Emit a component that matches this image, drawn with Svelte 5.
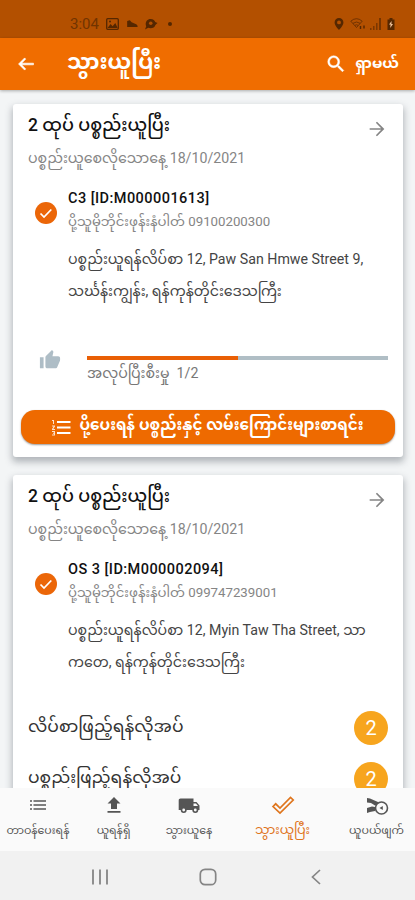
<script lang="ts">
	const title = 'သွားယူပြီး';

	const pickups = [
		{
			title: '2 ထုပ် ပစ္စည်းယူပြီး',
			date: '18/10/2021',
			name: 'C3 [ID:M000001613]',
			phone: '09100200300',
			address: ['ပစ္စည်းယူရန်လိပ်စာ 12, Paw San Hmwe Street 9,', 'သင်္ဃန်းကျွန်း, ရန်ကုန်တိုင်းဒေသကြီး'],
			done: 1,
			total: 2,
			todos: []
		},
		{
			title: '2 ထုပ် ပစ္စည်းယူပြီး',
			date: '18/10/2021',
			name: 'OS 3 [ID:M000002094]',
			phone: '099747239001',
			address: ['ပစ္စည်းယူရန်လိပ်စာ 12, Myin Taw Tha Street, သာ', 'ကတေ, ရန်ကုန်တိုင်းဒေသကြီး'],
			done: 0,
			total: 0,
			todos: [
				{ label: 'လိပ်စာဖြည့်ရန်လိုအပ်', count: 2 },
				{ label: 'ပစ္စည်းဖြည့်ရန်လိုအပ်', count: 2 }
			]
		}
	];

	const tabs = [
		{ icon: 'list', label: 'တာဝန်ပေးရန်' },
		{ icon: 'upload', label: 'ယူရန်ရှိ' },
		{ icon: 'truck', label: 'သွားယူနေ' },
		{ icon: 'check', label: 'သွားယူပြီး' },
		{ icon: 'cancel', label: 'ယူပယ်ဖျက်' }
	];

	let active = 'check';
</script>

<div class="screen">
	<div class="status">
		<span class="time">3:04</span>
		<svg class="s-image" width="13" height="12" viewBox="0 0 13 12">
			<rect x="0.7" y="0.7" width="11.6" height="10.6" rx="1" fill="none" stroke="currentColor" stroke-width="1.3" />
			<path d="M1.5 10 4.6 6l2 2.2L9.3 5l2.4 5z" fill="currentColor" />
			<circle cx="4" cy="3.5" r="1" fill="currentColor" />
		</svg>
		<svg class="s-shoe" width="11" height="8" viewBox="0 0 12 9">
			<path d="M0 1l3-.8 2 2.3 5.2 2.3q1.6.8 1.6 3.2H0z" fill="currentColor" />
		</svg>
		<svg class="s-chat" width="13" height="12" viewBox="0 0 14 12">
			<path d="M6 .5c3 0 4.600 1.600 5 3.400L13.500 5l-2.300 2C10.500 9.500 8.500 10.500 6 10.500L3.500 10 0 12l1.300-3.500C-.2 5 1.500.5 6 .5z" fill="currentColor" />
			<circle cx="6.200" cy="5.300" r="1.900" fill="#b35000" />
		</svg>
		<i class="dot"></i>
		<div class="signals">
			<svg width="10" height="12" viewBox="0 0 10 13">
				<path fill-rule="evenodd" d="M5 0a4.800 4.800 0 0 1 4.800 4.800C9.800 8 5 13 5 13S.2 8 .2 4.800A4.800 4.800 0 0 1 5 0zm0 2.700a2.100 2.100 0 1 0 0 4.200 2.100 2.100 0 0 0 0-4.200z" fill="currentColor" />
			</svg>
			<svg class="wifi" width="16" height="12" viewBox="0 0 16 12" fill="none" stroke="currentColor">
				<path d="M.8 3.200Q6.500-1.800 12.200 3.200L6.500 9.500z" opacity=".7" />
				<path d="M3 5.300q3.500-2.600 7 0M5 7.300q1.500-1 3 0" opacity=".7" />
				<path d="M10.500 8v3M14 7.500v3" stroke-width="1.400" />
			</svg>
			<svg class="bars" width="11" height="12" viewBox="0 0 11 12" fill="currentColor">
				<path opacity=".6" d="M0 10h1.500v2H0zM3 8h1.500v4H3zM6 5h1.500v7H6z" />
				<path opacity=".8" d="M9.200 0h1.600v12H9.200z" />
			</svg>
			<svg width="8" height="12" viewBox="0 0 8 12">
				<path d="M2.500 0h3v1.500h2V12H.5V1.500h2z" fill="currentColor" />
				<path d="M4.600 3 2 6.500h1.600L3.200 10 6 6H4.400z" fill="#f3c7a0" />
			</svg>
		</div>
	</div>

	<header class="appbar">
		<svg class="back" width="20" height="20" viewBox="0 0 24 24" fill="#fff" stroke="#fff" stroke-width=".7">
			<path d="M21 11H6.830l4.880-4.880L10.300 4.700 3 12l7.300 7.300 1.410-1.420L6.830 13H21z" />
		</svg>
		<h1>{title}</h1>
		<div class="search">
			<svg width="22" height="22" viewBox="0 0 24 24" fill="#fff" stroke="#fff" stroke-width=".5">
				<path d="M15.500 14h-.79l-.28-.27A6.471 6.471 0 0 0 16 9.500 6.500 6.500 0 1 0 9.500 16c1.610 0 3.090-.59 4.230-1.570l.27.28v.79l5 4.990L20.490 19l-4.990-5zm-6 0C7.010 14 5 11.990 5 9.500S7.010 5 9.500 5 14 7.010 14 9.500 11.990 14 9.500 14z" />
			</svg>
			<span>ရှာမယ်</span>
		</div>
	</header>

	<main class="list">
		{#each pickups as p}
			<section class="card">
				<div class="head">
					<h2>{p.title}</h2>
					<svg width="22" height="22" viewBox="0 0 24 24" fill="#858585">
						<path d="m12 4-1.300 1.300 5.800 5.800H4v1.800h12.500l-5.800 5.800L12 20l8-8z" />
					</svg>
				</div>
				<div class="date">ပစ္စည်းယူစေလိုသောနေ့ {p.date}</div>

				<div class="sender">
					<svg class="tick" width="22" height="22" viewBox="0 0 22 22">
						<circle cx="11" cy="11" r="11" fill="#eb6608" />
						<path d="m5.500 11.500 3.500 3.500 7.300-7.500" fill="none" stroke="#fff" stroke-width="1.700" />
					</svg>
					<div class="info">
						<div class="name">{p.name}</div>
						<div class="phone">ပို့သူမိုဘိုင်းဖုန်းနံပါတ် {p.phone}</div>
						<div class="address">
							{#each p.address as line}
								<div>{line}</div>
							{/each}
						</div>
					</div>
				</div>

				{#if p.total}
					<div class="progress">
						<svg width="22" height="22" viewBox="0 0 24 24" fill="#aebdc6">
							<path d="M1 21h4V9H1v12zm22-11c0-1.100-.9-2-2-2h-6.310l.95-4.570.03-.32c0-.41-.17-.79-.44-1.060L14.170 1 7.590 7.590C7.220 7.950 7 8.450 7 9v10c0 1.100.9 2 2 2h9c.83 0 1.540-.5 1.840-1.220l3.020-7.050c.09-.23.14-.47.14-.73v-2z" />
						</svg>
						<div class="meter">
							<div class="track">
								<div class="fill" style={`width: ${(p.done / p.total) * 100}%`}></div>
							</div>
							<div class="caption">အလုပ်ပြီးစီးမှု&nbsp; {p.done}/{p.total}</div>
						</div>
					</div>
					<button class="route">
						<svg width="19" height="17" viewBox="0 0 19 17" fill="#fff">
							<path d="M5 2h13.500v1.900H5zM5 7.500h13.500v1.900H5zM5 13h13.500v1.900H5z" />
							<path opacity=".8" d="M0 1h2v4H1V2H0zM0 6.500h3v1L1.300 10H3v1H0v-1l1.600-2.500H0zM0 12h3v4.500H0v-.9h2v-.9H1v-.9h1V13H0z" />
						</svg>
						<span>ပို့ပေးရန် ပစ္စည်းနှင့် လမ်းကြောင်းများစာရင်း</span>
					</button>
				{/if}

				{#if p.todos.length}
					<div class="todos">
						{#each p.todos as todo}
							<div class="todo">
								<span>{todo.label}</span>
								<b>{todo.count}</b>
							</div>
						{/each}
					</div>
				{/if}
			</section>
		{/each}
	</main>

	<nav class="tabs">
		{#each tabs as tab}
			<button class="tab" class:active={tab.icon === active} on:click={() => (active = tab.icon)}>
				<svg width="24" height="24" viewBox="0 0 24 24" fill="currentColor">
					{#if tab.icon === 'list'}
						<path opacity=".75" d="M4 6h2v2H4zM4 10h2v2H4zM4 14h2v2H4zM7.500 6H20v2H7.500zM7.500 10H20v2H7.500zM7.500 14H20v2H7.500z" />
					{:else if tab.icon === 'upload'}
						<path d="M9 15h6V9.500h3.500L12 3 5.500 9.500H9zM5.500 17h13v1.800h-13z" />
					{:else if tab.icon === 'truck'}
						<path d="M19.500 8h-3V4.500H3.500c-1 0-1.800.8-1.800 1.800V16h2a3 3 0 0 0 6 0h5.600a3 3 0 0 0 6 0h1.200v-4.500zM6.700 17.400a1.400 1.400 0 1 1 0-2.800 1.400 1.400 0 0 1 0 2.800zm12.300-8 2 2.600h-4.500V9.400zm-.7 8a1.400 1.400 0 1 1 0-2.800 1.400 1.400 0 0 1 0 2.800z" />
					{:else if tab.icon === 'check'}
						<path d="M2 12.500 4.700 9.800 9 14 19.500 3.500 22.200 6 9 19z" fill="none" stroke="currentColor" stroke-width="1.700" />
					{:else}
						<path d="M2 4l3 .5 8 3.500 1.500 2.500-4.500 1-4-2.500-4-.5zM2 14l5-1.500 3 .5v4L5 18l-3 1z" />
						<circle cx="16.500" cy="14" r="6" fill="#fafafa" stroke="currentColor" stroke-width="1.600" />
						<path d="M17.800 12v4l-3.300-2z" />
					{/if}
				</svg>
				<span>{tab.label}</span>
			</button>
		{/each}
	</nav>

	<div class="sysnav">
		<svg width="18" height="18" viewBox="0 0 18 18" stroke="#858585" stroke-width="1.800">
			<path d="M2 1.500v15M9 1.500v15M16 1.500v15" />
		</svg>
		<svg width="18" height="18" viewBox="0 0 18 18" fill="none" stroke="#858585" stroke-width="1.700">
			<rect x="1.300" y="1.300" width="15.400" height="15.400" rx="4.800" />
		</svg>
		<svg width="18" height="18" viewBox="0 0 18 18" fill="none" stroke="#858585" stroke-width="1.700">
			<path d="M13 2 5.500 9l7.500 7" />
		</svg>
	</div>
</div>

<style>
	:global(body) {
		background: #f3f5f6;
	}

	.screen {
		display: flex;
		flex-direction: column;
		height: 900px;
		overflow: hidden;
		font-family: Roboto, 'Noto Sans Myanmar', Padauk, 'Noto Sans', sans-serif;
		color: #222;
	}

	svg {
		display: block;
		flex: none;
	}

	h1,
	h2 {
		margin: 0;
	}

	button {
		border: 0;
		padding: 0;
		font-family: inherit;
	}

	.status {
		display: flex;
		flex: none;
		align-items: center;
		box-sizing: border-box;
		height: 38px;
		padding: 10px 20px 0 70px;
		background: #b35000;
		color: #552700;
	}

	.time {
		width: 36px;
		font-size: 15px;
		line-height: 16px;
		color: #713400;
	}

	.s-shoe {
		margin-left: 8px;
	}

	.s-chat {
		margin-left: 7px;
	}

	.dot {
		width: 4px;
		height: 4px;
		margin-left: 10px;
		border-radius: 50%;
		background: currentColor;
	}

	.signals {
		display: flex;
		align-items: center;
		margin-left: auto;
	}

	.wifi {
		margin-left: 6px;
	}

	.bars {
		margin: 0 6px 0 4px;
	}

	.appbar {
		display: flex;
		flex: none;
		align-items: center;
		box-sizing: border-box;
		position: relative;
		height: 52px;
		padding: 0 16px;
		background: #f06d00;
		color: #fff;
		box-shadow: 0 1px 3px rgba(0, 0, 0, 0.3);
	}

	h1 {
		margin-left: 31px;
		font-size: 21.300px;
		line-height: 46px;
		height: 50px;
		white-space: nowrap;
	}

	.search {
		display: flex;
		align-items: center;
		margin-left: auto;
		font-size: 15px;
		font-weight: 700;
		line-height: 48px;
	}

	.search span {
		margin: -2px 0 0 8px;
	}

	.list {
		flex: 1;
		min-height: 0;
		overflow: hidden;
		padding: 14px 12px 0 13px;
	}

	.card {
		box-sizing: border-box;
		margin-bottom: 18px;
		padding: 7px 8px 13px;
		overflow: hidden;
		border-radius: 3px;
		background: #fff;
		box-shadow: 0 4px 7px 1px rgba(70, 80, 90, 0.38);
		white-space: nowrap;
	}

	.head {
		display: flex;
		justify-content: space-between;
		height: 29px;
		padding: 0 7px;
	}

	.head svg {
		margin-top: 7px;
	}

	h2 {
		font-size: 17.500px;
		font-weight: 500;
		line-height: 28px;
		color: #111;
	}

	.date {
		height: 36px;
		padding-left: 7px;
		font-size: 14.200px;
		line-height: 36px;
		color: #858585;
	}

	.sender {
		display: flex;
		margin-top: 10px;
		padding-left: 14px;
	}

	.tick {
		margin-top: 16px;
	}

	.info {
		margin-left: 11px;
	}

	.name {
		height: 24px;
		font-size: 14.500px;
		font-weight: 500;
		letter-spacing: 0.45px;
		line-height: 25px;
		color: #111;
	}

	.phone {
		height: 24px;
		font-size: 13.250px;
		line-height: 24px;
		color: #858585;
	}

	.address {
		margin-top: 9px;
		font-size: 14.200px;
		color: #444;
	}

	.address div {
		height: 32px;
		line-height: 33px;
	}

	.progress {
		display: flex;
		height: 61px;
		margin-top: 42px;
		padding: 0 7px 0 18px;
	}

	.meter {
		flex: 1;
		margin: 7px 0 0 26px;
	}

	.track {
		height: 4px;
		background: #b0bec5;
	}

	.fill {
		height: 4px;
		background: #e95f05;
	}

	.caption {
		height: 24px;
		font-size: 14.200px;
		line-height: 26px;
		color: #777;
	}

	.route {
		display: flex;
		align-items: center;
		justify-content: center;
		width: 100%;
		height: 34px;
		border-radius: 14px;
		background: #ee6a00;
		box-shadow: 0 1px 2px rgba(0, 0, 0, 0.4);
		color: #fff;
		font-size: 15.200px;
		font-weight: 700;
		white-space: nowrap;
	}

	.route span {
		margin: -1px 0 0 8px;
	}

	.todos {
		margin-top: 24px;
		padding: 0 7px;
	}

	.todo {
		display: flex;
		align-items: center;
		justify-content: space-between;
		height: 51px;
		font-size: 17.150px;
		color: #333;
	}

	.todo b {
		width: 34px;
		height: 34px;
		border-radius: 50%;
		background: #f7a51e;
		color: #fff;
		font-size: 20px;
		font-weight: 400;
		line-height: 34px;
		text-align: center;
	}

	.tabs {
		display: grid;
		flex: none;
		grid-template-columns: 76px 75px 76px 111px 77px;
		height: 63px;
		background: #fafafa;
	}

	.tab {
		display: flex;
		flex-direction: column;
		align-items: center;
		padding-top: 6px;
		background: none;
		color: #555;
		font-size: 11px;
		white-space: nowrap;
	}

	.tab span {
		height: 24px;
		line-height: 26px;
	}

	.tab.active {
		color: #df751d;
		font-size: 12.800px;
	}

	.tab.active span {
		line-height: 24px;
	}

	.sysnav {
		display: flex;
		flex: none;
		align-items: center;
		box-sizing: border-box;
		height: 49px;
		padding: 2px 90px 0 91px;
		justify-content: space-between;
		background: #f1f1f1;
	}
</style>
